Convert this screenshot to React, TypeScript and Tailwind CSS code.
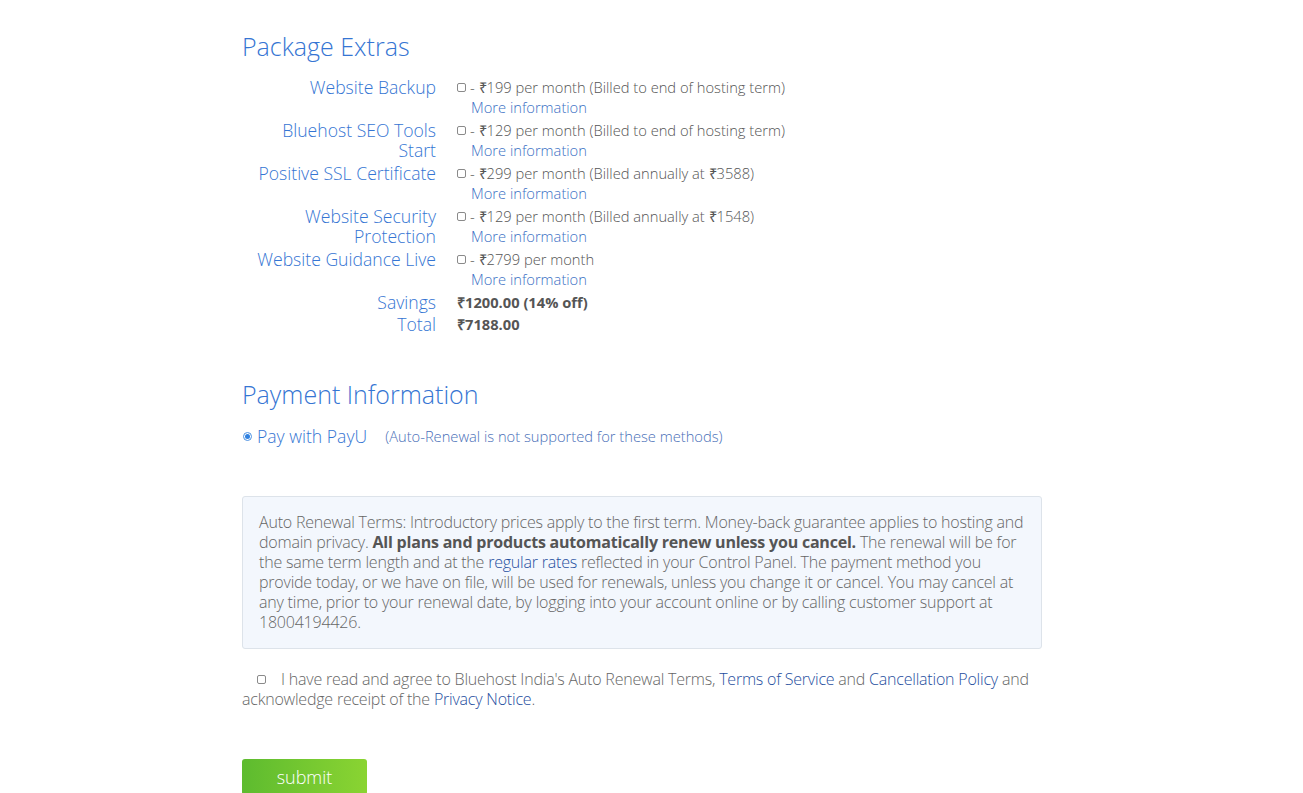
import React from "react";

const extras = [
  { label: ["Website Backup"], price: "- ₹199 per month (Billed to end of hosting term)" },
  { label: ["Bluehost SEO Tools", "Start"], price: "- ₹129 per month (Billed to end of hosting term)" },
  { label: ["Positive SSL Certificate"], price: "- ₹299 per month (Billed annually at ₹3588)" },
  { label: ["Website Security", "Protection"], price: "- ₹129 per month (Billed annually at ₹1548)" },
  { label: ["Website Guidance Live"], price: "- ₹2799 per month" },
];

function Box() {
  return <span className="inline-block w-[9px] h-[9px] border border-[#8a8a8a] rounded-[2px] bg-white" />;
}

export default function App() {
  return (
    <div className="min-h-screen bg-white font-['Open_Sans',sans-serif] text-[#555]">
      <div className="w-[800px] ml-[242px] pt-[29px]">
        {/* Package extras */}
        <h2 className="text-[25px] leading-[34px] font-light text-[#3575d3]">Package Extras</h2>
        <div className="mt-[14px] flex flex-col gap-[3px]">
          {extras.map((e) => (
            <div key={e.price} className="flex">
              <div className="w-[194px] text-right text-[17.6px] leading-[20px] font-light text-[#3575d3]">
                {e.label.map((l) => (
                  <div key={l}>{l}</div>
                ))}
              </div>
              <div className="ml-[21px] text-[14.7px] leading-[20px] font-light">
                <div className="flex items-center gap-[4px]">
                  <Box />
                  <span>{e.price}</span>
                </div>
                <div className="pl-[14px] text-[#3a6fc4]">More information</div>
              </div>
            </div>
          ))}
          <div className="flex items-center mt-[-1px]">
            <div className="w-[194px] text-right text-[17.6px] leading-[22px] font-light text-[#3575d3]">Savings</div>
            <div className="ml-[21px] text-[14.7px] leading-[22px] font-bold">₹1200.00 (14% off)</div>
          </div>
          <div className="flex items-center mt-[-3px]">
            <div className="w-[194px] text-right text-[17.6px] leading-[22px] font-light text-[#3575d3]">Total</div>
            <div className="ml-[21px] text-[14.7px] leading-[22px] font-bold">₹7188.00</div>
          </div>
        </div>

        {/* Payment information */}
        <h2 className="mt-[42px] text-[25px] leading-[34px] font-light text-[#3575d3]">Payment Information</h2>
        <div className="mt-[13px] flex items-center">
          <span className="w-[9px] h-[9px] rounded-full border border-[#4a90e2] flex items-center justify-center ml-[1px]">
            <span className="w-[5px] h-[5px] rounded-full bg-[#2f80e0]" />
          </span>
          <span className="ml-[5px] text-[17.6px] leading-[24px] font-light text-[#3575d3]">Pay with PayU</span>
          <span className="ml-[18px] text-[14.7px] leading-[24px] font-light text-[#4a6fb8]">
            (Auto-Renewal is not supported for these methods)
          </span>
        </div>

        <div className="mt-[48px] border border-[#dde3ea] rounded-[3px] bg-[#f3f7fd] px-[16px] pt-[15px] pb-[16px] text-[16px] leading-[20px] font-light text-[#666] tracking-[-0.21px]">
          Auto Renewal Terms: Introductory prices apply to the first term. Money-back guarantee applies to hosting and
          domain privacy. <span className="font-bold text-[#555]">All plans and products automatically renew unless you cancel.</span> The
          renewal will be for the same term length and at the <span className="text-[#1f4fa0]">regular rates</span> reflected in your
          Control Panel. The payment method you provide today, or we have on file, will be used for renewals, unless you
          change it or cancel. You may cancel at any time, prior to your renewal date, by logging into your account online or
          by calling customer support at 18004194426.
        </div>

        <div className="mt-[19px] text-[16px] leading-[20px] font-light text-[#666] tracking-[-0.21px]">
          <span className="inline-block ml-[15px] mr-[15px] align-[1px]">
            <Box />
          </span>
          I have read and agree to Bluehost India's Auto Renewal Terms,{" "}
          <span className="text-[#1f4fa0]">Terms of Service</span> and{" "}
          <span className="text-[#1f4fa0]">Cancellation Policy</span> and acknowledge receipt of the{" "}
          <span className="text-[#1f4fa0]">Privacy Notice</span>.
        </div>

        <button className="mt-[50px] w-[125px] h-[36px] rounded-[3px] bg-gradient-to-r from-[#5dbb2f] to-[#8ad432] text-white text-[18px] font-light">
          submit
        </button>
      </div>
    </div>
  );
}
